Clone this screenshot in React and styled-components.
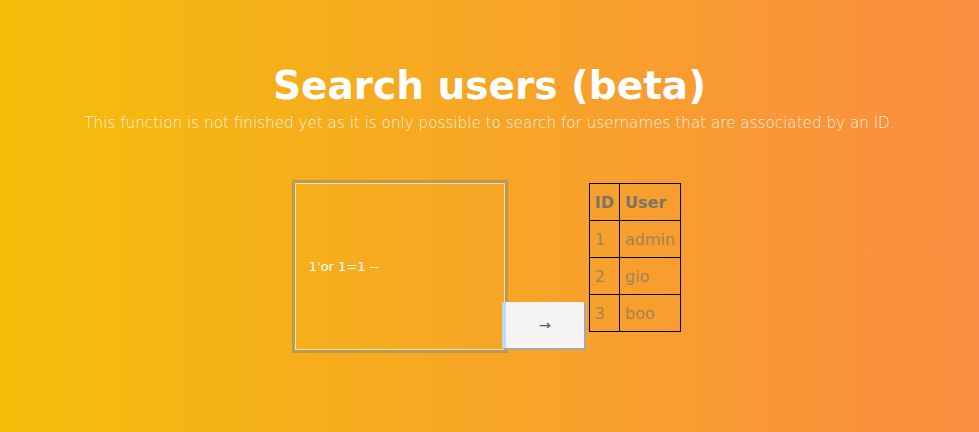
import styled, { createGlobalStyle } from "styled-components";

const GlobalStyle = createGlobalStyle`
  html, body {
    margin: 0;
    padding: 0;
  }
  body {
    font-family: "DejaVu Sans", Verdana, sans-serif;
  }
`;

const users = [
  [1, "admin"],
  [2, "gio"],
  [3, "boo"],
];

export default function App() {
  return (
    <Page>
      <GlobalStyle />
      <Title>Search users (beta)</Title>
      <Subtitle>
        This function is not finished yet as it is only possible to search for
        usernames that are associated by an ID.
      </Subtitle>
      <Row>
        <SearchForm onSubmit={(e) => e.preventDefault()}>
          <QueryInput type="text" defaultValue="1'or 1=1 --" />
          <GoButton type="submit">&rarr;</GoButton>
        </SearchForm>
        <ResultTable>
          <thead>
            <tr>
              <HeadCell>ID</HeadCell>
              <HeadCell>User</HeadCell>
            </tr>
          </thead>
          <tbody>
            {users.map(([id, name]) => (
              <tr key={id}>
                <Cell>{id}</Cell>
                <Cell>{name}</Cell>
              </tr>
            ))}
          </tbody>
        </ResultTable>
      </Row>
    </Page>
  );
}

const Page = styled.div`
  width: 100%;
  height: 432px;
  overflow: hidden;
  background: linear-gradient(to right, #f4be0a, #fa8d41);
  display: flex;
  flex-direction: column;
  align-items: center;
  padding-top: 62px;
  box-sizing: border-box;
`;

const Title = styled.h1`
  margin: 0;
  font-size: 39px;
  font-weight: 700;
  line-height: 48px;
  color: #fff;
`;

const Subtitle = styled.p`
  margin: 4px 0 0;
  font-size: 15.2px;
  font-weight: 200;
  line-height: 18px;
  color: rgba(255, 255, 255, 0.88);
`;

const Row = styled.div`
  display: flex;
  align-items: flex-start;
  gap: 5px;
  margin-top: 48px;
  padding-right: 6px;
`;

const SearchForm = styled.form`
  display: flex;
  align-items: flex-end;
  margin: 0;
`;

const QueryInput = styled.input`
  width: 216px;
  height: 173px;
  box-sizing: border-box;
  padding: 0 14px;
  background: transparent;
  border: 3px solid rgba(150, 140, 120, 0.6);
  box-shadow: inset 0 0 0 1px rgba(255, 236, 190, 0.85);
  color: #fff;
  font-family: "DejaVu Sans", sans-serif;
  font-size: 13px;
  outline: none;
`;

const GoButton = styled.button`
  position: relative;
  z-index: 1;
  width: 82px;
  height: 46px;
  margin: 0 0 5px -6px;
  box-sizing: border-box;
  background: #f5f4f2;
  border: none;
  border-left: 4px solid #bcd9f5;
  box-shadow: 2px 2px 0 #a8a8a8;
  color: #555;
  font-family: "DejaVu Sans", sans-serif;
  font-size: 14px;
  cursor: pointer;
`;

const ResultTable = styled.table`
  margin-top: 3px;
  border-collapse: collapse;
  font-size: 16px;
`;

const HeadCell = styled.th`
  height: 37px;
  padding: 0 5px;
  box-sizing: border-box;
  border: 1px solid #000;
  text-align: left;
  font-weight: 700;
  color: #7a7466;
`;

const Cell = styled.td`
  height: 37px;
  padding: 0 5px;
  box-sizing: border-box;
  border: 1px solid #000;
  color: rgba(130, 120, 100, 0.75);
`;
